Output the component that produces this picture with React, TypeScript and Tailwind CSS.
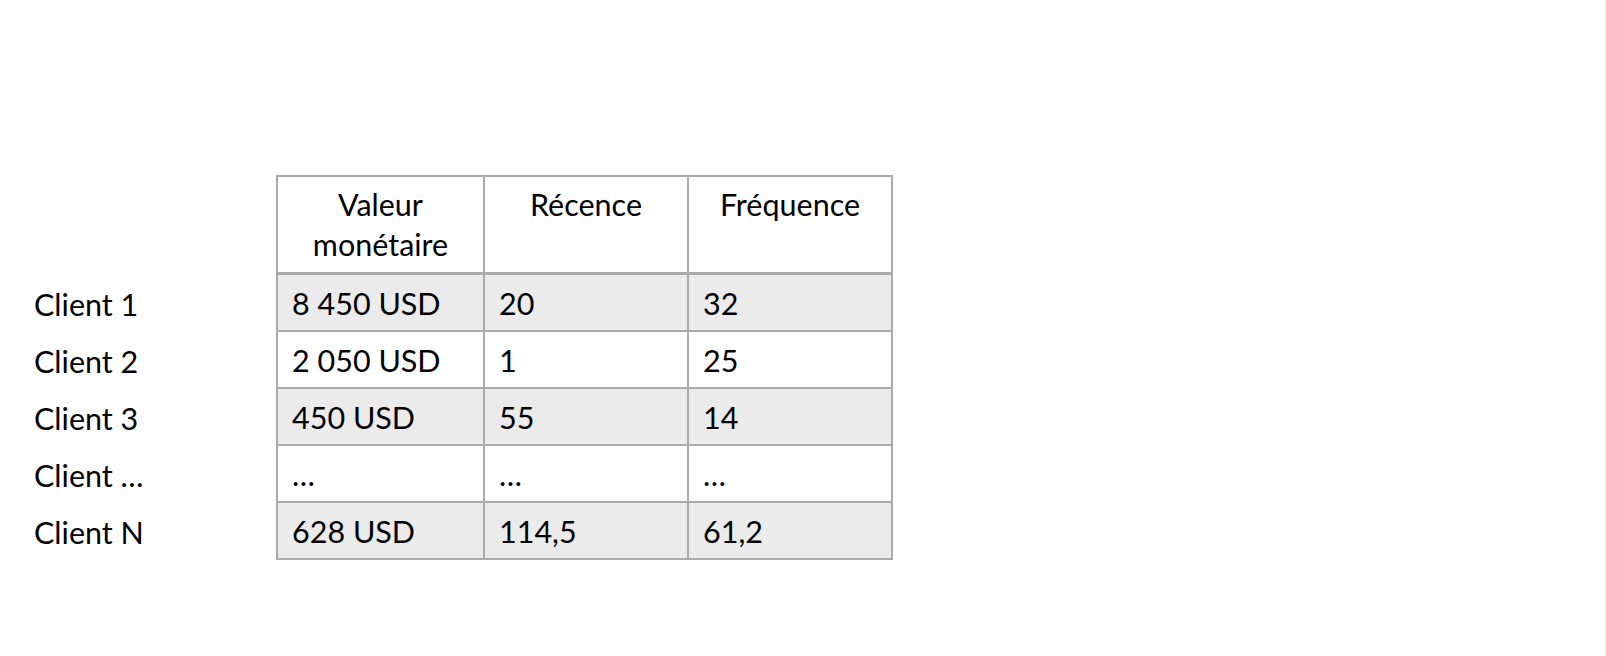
import React from "react";

const rows = [
  { label: "Client 1", cells: ["8 450 USD", "20", "32"], shaded: true },
  { label: "Client 2", cells: ["2 050 USD", "1", "25"], shaded: false },
  { label: "Client 3", cells: ["450 USD", "55", "14"], shaded: true },
  { label: "Client …", cells: ["…", "…", "…"], shaded: false },
  { label: "Client N", cells: ["628 USD", "114,5", "61,2"], shaded: true },
];

const headers = [["Valeur", "monétaire"], ["Récence"], ["Fréquence"]];

export default function App() {
  return (
    <div
      className="w-[1606px] h-[656px] bg-white text-black overflow-hidden border-r-2 border-[#f3f3f3]"
      style={{ fontFamily: "Lato, 'Open Sans', sans-serif" }}
    >
      <div className="flex pt-[175px]">
        <div className="w-[276px] pl-[34px] pt-[100px] flex flex-col gap-[2px] text-[30.5px] leading-[40px]">
          {rows.map((r) => (
            <div key={r.label} className="h-[55px] flex items-center pt-[3px]">
              {r.label}
            </div>
          ))}
        </div>
        <div className="grid grid-cols-[205px_202px_202px] gap-[2px] p-[2px] bg-[#ababab] text-[30.5px] leading-[40px]">
          {headers.map((h, i) => (
            <div
              key={i}
              className="h-[96px] bg-white border-b border-[#ababab] pt-[7px] flex flex-col items-center"
            >
              {h.map((t) => (
                <span key={t}>{t}</span>
              ))}
            </div>
          ))}
          {rows.map((r) =>
            r.cells.map((c, j) => (
              <div
                key={r.label + j}
                className={`h-[55px] flex items-center pl-[14px] ${
                  r.shaded ? "bg-[#ebebeb]" : "bg-white"
                }`}
              >
                {c}
              </div>
            ))
          )}
        </div>
      </div>
    </div>
  );
}
